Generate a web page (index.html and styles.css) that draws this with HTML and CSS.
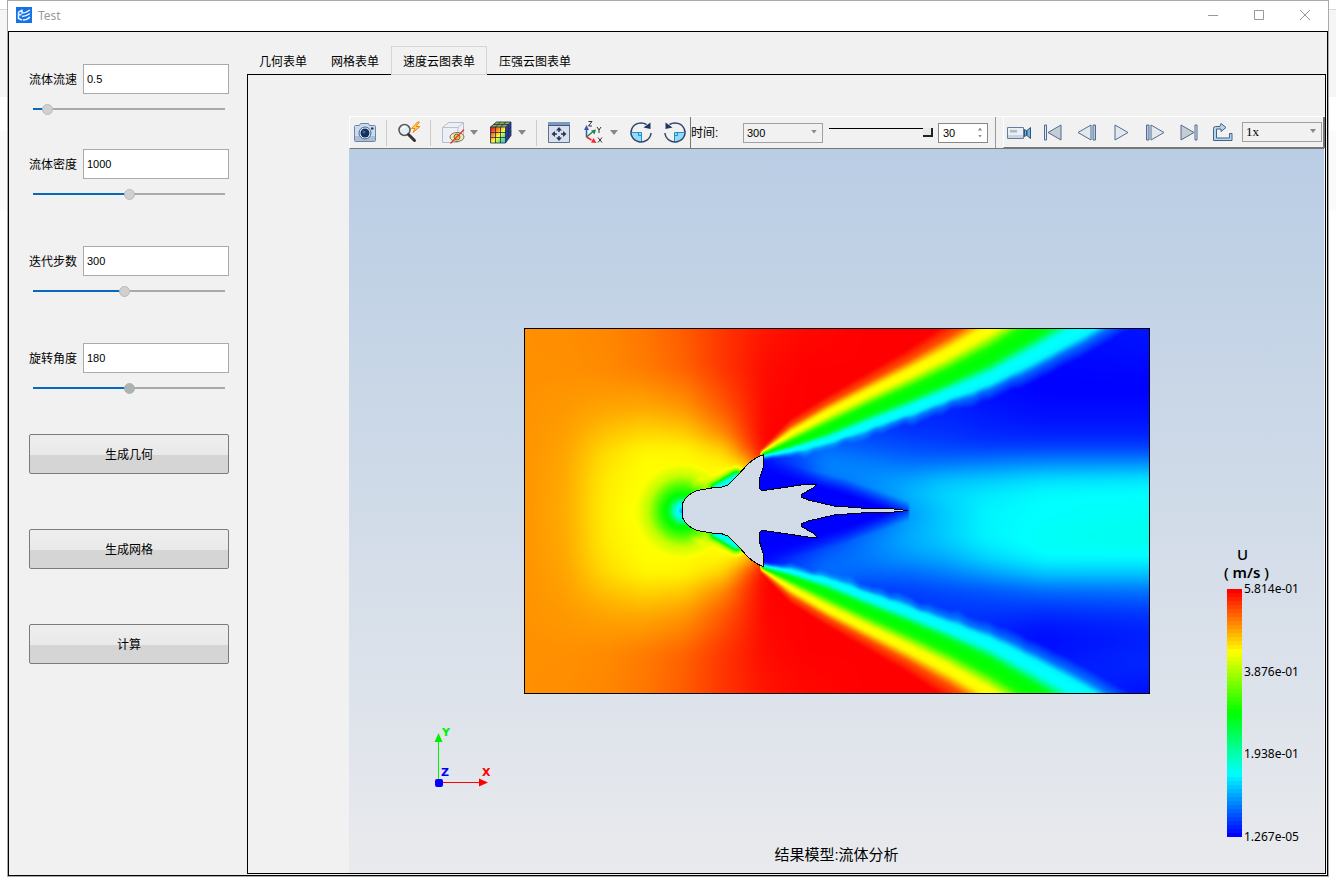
FILE: index.html
```html
<!DOCTYPE html>
<html lang="zh-CN">
<head>
<meta charset="utf-8">
<title>Test</title>
<link rel="stylesheet" href="styles.css">
</head>
<body>
<div class="window">
  <header class="titlebar">
    <svg class="logo" width="16" height="16" viewBox="0 0 16 16"><rect width="16" height="16" fill="#1673e6"/><path d="M2.500 5l3.500-1.500M2.500 5v6.500l3.500 1.500M2.500 8l3-.5M6 2.500v3.500q4 0 8-3M6 9.500q4 0 8-3M7 13q4 0 7-3" fill="none" stroke="#e8f3ff" stroke-width="1.500"/></svg>
    <h1 class="title">Test</h1>
    <div class="window-buttons">
      <button type="button" aria-label="最小化"><svg width="12" height="12" viewBox="0 0 12 12"><path d="M1 5.500h10"/></svg></button>
      <button type="button" aria-label="最大化"><svg width="12" height="12" viewBox="0 0 12 12"><path d="M1.500.5h9v9h-9z"/></svg></button>
      <button type="button" aria-label="关闭"><svg width="12" height="12" viewBox="0 0 12 12"><path d="M1 0l10 10M11 0L1 10"/></svg></button>
    </div>
  </header>
  <main class="content">
    <form class="sidebar">
      <div class="field">
        <label for="speed">流体流速</label><input id="speed" type="text" value="0.5">
        <input class="slider" type="range" aria-label="流体流速" min="0" max="10" step="0.1" value="0.5" style="--fill:5%">
      </div>
      <div class="field">
        <label for="density">流体密度</label><input id="density" type="text" value="1000">
        <input class="slider" type="range" aria-label="流体密度" min="0" max="2000" value="1000" style="--fill:50%">
      </div>
      <div class="field spaced">
        <label for="steps">迭代步数</label><input id="steps" type="text" value="300">
        <input class="slider" type="range" aria-label="迭代步数" min="0" max="635" value="300" style="--fill:47%">
      </div>
      <div class="field spaced">
        <label for="angle">旋转角度</label><input id="angle" type="text" value="180">
        <input class="slider strong" type="range" aria-label="旋转角度" min="0" max="360" value="180" style="--fill:50%">
      </div>
      <div class="actions">
        <button type="button">生成几何</button>
        <button type="button">生成网格</button>
        <button type="button">计算</button>
      </div>
    </form>
    <section class="workspace">
      <div class="tabs" role="tablist">
        <button type="button" role="tab">几何表单</button>
        <button type="button" role="tab">网格表单</button>
        <button type="button" role="tab" class="active" aria-selected="true">速度云图表单</button>
        <button type="button" role="tab">压强云图表单</button>
      </div>
      <div class="panel">
        <div class="toolbar">
          <div class="tools">
            <button class="tool" type="button" aria-label="截图"><svg viewBox="0 0 24 24"><path d="M1.500 5.500q0-1 1-1h4l1-2h8l1 2h5q1 0 1 1v14q0 1-1 1h-19q-1 0-1-1z" fill="#c9dcee" stroke="#6d86a8"/><path d="M2 15h20v5H2z" fill="#a9bed6"/><circle cx="12" cy="12" r="6" fill="#e8f0f8" stroke="#47648c"/><circle cx="12" cy="12" r="4.500" fill="#14305e"/><circle cx="11" cy="11" r="1.500" fill="#42659a"/><path d="M18 7.500h2.500" stroke="#14305e" stroke-width="2"/></svg></button>
            <i class="sep"></i>
            <button class="tool" type="button" aria-label="快速缩放"><svg viewBox="0 0 24 24"><circle cx="7.500" cy="9" r="5.500" fill="#e6edf1" stroke="#555" stroke-width="1.500"/><path d="M4.500 8q1-2.500 4-2.500" fill="none" stroke="#fff" stroke-width="1.500"/><path d="M11.500 13.500l6 6" stroke="#333" stroke-width="3" stroke-linecap="round"/><path d="M20.500 1l-6 6.500h3.500l-2 4 7-6h-4L22.500 1z" fill="#ffd34e" stroke="#f0821c"/></svg></button>
            <i class="sep"></i>
            <button class="tool" type="button" aria-label="显示隐藏"><svg viewBox="0 0 24 24"><path d="M1.500 6.500l6-5h15v13l-5.500 7H1.500z" fill="#eceff5" stroke="#b7bcc8"/><path d="M1.500 6.500H17v15M17 6.500L22.500 1.500" fill="none" stroke="#bcc1cc"/><ellipse cx="16" cy="16" rx="7" ry="4.500" fill="#fbe7a1" stroke="#6c7179"/><circle cx="16" cy="16" r="3" fill="#eebf52" stroke="#77684a"/><path d="M9.500 22.500L23 8.500" stroke="#dd4024" stroke-width="1.300"/></svg></button><i class="arrow"></i>
            <button class="tool after-arrow" type="button" aria-label="着色"><svg viewBox="0 0 24 24"><defs><linearGradient id="cube" x1="0" y1="0" x2="1" y2="1"><stop offset="0.100" stop-color="#f2221a"/><stop offset="0.350" stop-color="#ff9620"/><stop offset="0.550" stop-color="#ffff32"/><stop offset="0.750" stop-color="#6de66e"/><stop offset="1" stop-color="#35b8ff"/></linearGradient></defs><path d="M1.500 6l6-5H22v13.500L16.500 22h-15z" fill="#26409f"/><path d="M1.500 6H16.500v16H1.500z" fill="url(#cube)"/><path d="M1.500 6l6-5H22l-5.500 5z" fill="#86b54c"/><path d="M1.500 6H16.500v16H1.500zM6.500 6v16M11.500 6v16M1.500 11.500h15M1.500 16.500h15M16.500 6L22 1v13.500L16.500 22M19.500 4v14M16.500 11.500L22 6M16.500 16.500L22 10M1.500 6l6-5H22M6.500 6l5-5M11.500 6l5.500-5M4.500 3.500h15" fill="none" stroke="#222c4e" stroke-width=".8"/></svg></button><i class="arrow"></i>
            <i class="sep"></i>
            <button class="tool" type="button" aria-label="适应窗口"><svg viewBox="0 0 24 24"><path d="M1.500 1.500h21v20h-21z" fill="#d9e0ea" stroke="#5d7293"/><path d="M1 1h22v3H1z" fill="#7e9abb"/><path d="M1 4.500h22" stroke="#415c87"/><path d="M12 6l3 3.500H9zM12 20l3-3.500H9zM4.500 13l3.500-3v6zM19.500 13l-3.500-3v6z" fill="#213862"/><path d="M12 8v3M12 15v3M7 13h3M14 13h3" stroke="#213862" stroke-width="1.500"/></svg></button>
            <button class="tool gap" type="button" aria-label="视图方向"><svg viewBox="0 0 24 24"><path d="M5.500 16V7" stroke="#3557ba" stroke-width="1.500"/><path d="M5.500 4L8 9H3z" fill="#3557ba"/><path d="M5.500 16l6-5" stroke="#25834a" stroke-width="1.500"/><path d="M15 8.500l-1.500 5-3.500-4z" fill="#25834a"/><path d="M5.500 16l5 3" stroke="#ef2929" stroke-width="1.500"/><path d="M15.500 22l-5.500-.5 2.500-4.500z" fill="#ef2929"/><path d="M7.500.5H11L7.500 5H11M16 6l2 3 2-3M18 9v3M17 16.500l4 5M21 16.500l-4 5" fill="none" stroke="#333"/></svg></button><i class="arrow"></i>
            <button class="tool after-arrow" type="button" aria-label="顺时针旋转"><svg viewBox="0 0 24 24"><path d="M3 11.500h9.500V21Q4 19.500 3 11.500z" fill="#8edcff"/><path d="M3 11.500h9.500V21M9.500 11.500v3h3" fill="none" stroke="#278dc4"/><path d="M22 12a10 9.500 0 1 1-4.500-8.500" fill="none" stroke="#2e456e" stroke-width="1.500"/><path d="M21.500 1.500v6.500l-7-1.500z" fill="#20365f"/></svg></button>
            <button class="tool gap" type="button" aria-label="逆时针旋转"><svg viewBox="0 0 24 24"><path d="M21 11.500h-9.500V21Q20 19.500 21 11.500z" fill="#8edcff"/><path d="M21 11.500h-9.500V21M14.500 11.500v3h-3" fill="none" stroke="#278dc4"/><path d="M2 12A10 9.500 0 1 0 6.500 3.500" fill="none" stroke="#2e456e" stroke-width="1.500"/><path d="M2.500 1.500v6.500l7-1.500z" fill="#20365f"/></svg></button>
          </div>
          <div class="timebar">
            <label for="time">时间:</label>
            <span class="combo"><select id="time"><option>300</option></select></span>
            <input class="frame-slider" type="range" aria-label="帧" min="0" max="30" value="30">
            <span class="spin"><input type="number" aria-label="帧数" value="30"></span>
          </div>
          <div class="player">
            <button class="tool" type="button" aria-label="录制"><svg viewBox="0 0 24 24"><path d="M.5 7.500h16v11H.5z" fill="#e9eef5" stroke="#667d9e"/><path d="M3 10h7v2.500H3z" fill="#adb7c5"/><path d="M1 15h15v3H1z" fill="#c9d4e1"/><path d="M17.500 9.500l2 1v5l-2 1zM20 10.500l3.500-3v11L20 15.500z" fill="#6fb2dc" stroke="#315375"/></svg></button>
            <button class="tool" type="button" aria-label="第一帧"><svg viewBox="0 0 24 24"><path d="M3.500 5h2v15h-2z" fill="#dce6ef" stroke="#536b93"/><path d="M20 5v15L7 12.500z" fill="#c5cdd3" stroke="#536b93"/></svg></button>
            <button class="tool" type="button" aria-label="上一帧"><svg viewBox="0 0 24 24"><path d="M3 12.500L16 5v15z" fill="#e2e9ed" stroke="#536b93"/><path d="M18 5h2.500v15H18z" fill="#b9cbe0" stroke="#536b93"/></svg></button>
            <button class="tool" type="button" aria-label="播放"><svg viewBox="0 0 24 24"><path d="M6 5l13 7.500L6 20z" fill="#e2e9ed" stroke="#536b93"/></svg></button>
            <button class="tool" type="button" aria-label="下一帧"><svg viewBox="0 0 24 24"><path d="M21 12.500L8 5v15z" fill="#e2e9ed" stroke="#536b93"/><path d="M3.500 5H6v15H3.500z" fill="#b9cbe0" stroke="#536b93"/></svg></button>
            <button class="tool" type="button" aria-label="最后一帧"><svg viewBox="0 0 24 24"><path d="M18 5h2v15h-2z" fill="#dce6ef" stroke="#536b93"/><path d="M4 5v15l13-7.500z" fill="#c5cdd3" stroke="#536b93"/></svg></button>
            <button class="tool" type="button" aria-label="循环"><svg viewBox="0 0 24 24"><path d="M9 6.500H4.500Q2.500 6.500 2.500 8.500V20.500h18.500V13.500h-2.500V18H5.500V9H10v2.500l5-4L10 3.500z" fill="#b9d5e9" stroke="#40628b"/></svg></button>
            <span class="combo rate"><select aria-label="播放速度"><option>1x</option></select></span>
          </div>
        </div>
        <div class="viewport">
          <div class="plot">
            <canvas id="field" width="624" height="364"></canvas>
            <svg class="craft" viewBox="0 0 624 364"><path d="M157 181.500V176Q159 170 164 166Q170 161 181 160Q190 158 196 158.500L203 156L213 146L223 135Q232 127 238.500 126L238.500 138Q236 144 234 152V158Q235 162 239 161.500L283 155L292 155L288 159L277 165L276 168L283 171Q296 174 309 177L336 179L369 180L383 181.500L369 183L336 184L309 186Q296 189 283 192L276 195L277 198L288 204L292 208L283 208L239 201.500Q235 201 234 205V211Q236 219 238.500 225L238.500 237.500Q232 236 223 228L213 217L203 207L196 204.500Q190 205 181 203Q170 202 164 197Q159 193 157 187Z"/></svg>
          </div>
          <svg class="triad" width="64" height="68" viewBox="0 0 64 68"><path d="M8.500 57V14" stroke="#00f000"/><path d="M8.500 8l4 9h-8z" fill="#00f000"/><path d="M9 57.500h42" stroke="#f00"/><path d="M58 57.500l-9-4v8z" fill="#f00"/><rect x="5" y="54" width="8" height="8" rx="2" fill="#00f"/><text x="12" y="11" fill="#00f000">Y</text><text x="11" y="51" fill="#00f">Z</text><text x="52" y="51" fill="#f00">X</text></svg>
          <div class="legend">
            <p class="quantity">U</p>
            <p class="unit">( <b>m/s</b> )</p>
            <div class="scale">
              <canvas id="scale" width="15" height="248"></canvas>
              <ol><li>5.814e-01</li><li>3.876e-01</li><li>1.938e-01</li><li>1.267e-05</li></ol>
            </div>
          </div>
          <p class="caption">结果模型:流体分析</p>
        </div>
      </div>
    </section>
  </main>
</div>
<script src="plot.js"></script>
</body>
</html>
```

FILE: styles.css
```css
* { box-sizing: border-box; }

body {
  margin: 0;
  min-height: 100vh;
  display: flex;
  flex-direction: column;
  background: linear-gradient(#fff 9px, #d8d8d8 9px 10px, #f5f5f5 10px 97px, #fff 97px 131px, #fafafa 131px 211px, #fff 211px);
  color: #000;
  font: 12px/16px "Liberation Sans", "Noto Sans CJK SC", sans-serif;
}

button, input, select { font: inherit; color: inherit; margin: 0; padding: 0; border: 0; border-radius: 0; }
button { background: none; }
p, h1, ol { margin: 0; padding: 0; list-style: none; font-weight: normal; }

.window {
  flex: 1;
  display: flex;
  flex-direction: column;
  margin: 0 7px 7px;
  border: 1px solid #aaa;
  background: #f1f1f1;
}

.titlebar {
  display: flex;
  align-items: center;
  height: 30px;
  padding: 0 17px 0 8px;
  gap: 6px;
  background: #fff;
}
.logo { margin-bottom: 2px; }
.title { font: 12px/16px "Noto Sans", sans-serif; color: #999; }
.window-buttons { display: flex; gap: 34px; margin-left: auto; }
.window-buttons button { width: 12px; height: 12px; display: flex; }
.window-buttons svg { fill: none; stroke: #999; }

.content { flex: 1; display: flex; border: 1px solid #000; }

.sidebar { flex: none; width: 238px; padding: 32px 18px 0 20px; }
.field { display: grid; grid-template-columns: 54px 1fr; align-items: center; row-gap: 7px; margin-bottom: 32px; }
.spaced { margin-top: 44px; margin-bottom: 44px; }
.field label { padding-top: 2px; }
.field input[type="text"] {
  min-width: 0;
  height: 30px;
  padding: 0 3px;
  border: 1px solid #aaa;
  background: #fff;
  font-size: 11px;
}

.slider {
  grid-column: 1 / -1;
  appearance: none;
  height: 16px;
  margin: 0 4px;
  background: linear-gradient(to right, #0868bd var(--fill), #aaa var(--fill)) center / 100% 2px no-repeat;
}
.slider::-webkit-slider-thumb { appearance: none; width: 11px; height: 11px; border-radius: 50%; background: #d0d0d0; border: 1px solid #bbb; }
.strong::-webkit-slider-thumb { background: #adb2b5; border-color: #adb2b5; }

.actions { display: flex; flex-direction: column; gap: 55px; margin-top: -6px; }
.actions button {
  height: 40px;
  padding-top: 2px;
  border: 1px solid #7c7c7c;
  border-radius: 2px;
  background: linear-gradient(#eee, #e9e9e9 53%, #d5d5d5 53%);
}

.workspace { flex: 1; min-width: 0; display: flex; flex-direction: column; padding: 14px 1px 1px 0; }
.tabs { display: flex; position: relative; margin-bottom: -1px; }
.tabs button { height: 29px; padding: 2px 11px 0; border: 1px solid transparent; }
.tabs .active { border-color: #d5d5d5; background: #f1f1f1; }
.panel { flex: 1; display: flex; flex-direction: column; border: 1px solid #000; padding: 41px 1px 0 101px; }

.toolbar { display: flex; height: 33px; border-top: 1px solid #fff; border-left: 1px solid #fff; border-bottom: 1px solid #777; }
.toolbar > div { display: flex; align-items: center; }
.tools { padding: 0 3px; border-right: 1px solid #777; }
.tool { flex: none; width: 24px; height: 24px; }
.tool svg { display: block; width: 24px; height: 24px; }
.gap, .after-arrow { margin-left: 10px; }
.sep { width: 1px; height: 26px; margin: 0 10px 0 9px; background: #ccc; }
.arrow { width: 8px; height: 5px; margin-left: 5px; margin-right: 1px; background: #888; clip-path: polygon(0 0, 100% 0, 50% 100%); }

.timebar { padding: 0 7px 0 0; border-right: 1px solid #999; }
.timebar label { width: 52px; }
.combo { position: relative; width: 80px; height: 20px; }
.combo select { appearance: none; width: 100%; height: 100%; padding: 0 3px; border: 1px solid #a0a0a0; background: #f1f1f1; font-size: 11px; }
.combo::after { content: ""; position: absolute; right: 6px; top: 7px; width: 6px; height: 4px; background: #888; clip-path: polygon(0 0, 100% 0, 50% 100%); pointer-events: none; }
.frame-slider { appearance: none; width: 104px; height: 10px; margin: 0 5px 0 6px; background: linear-gradient(#000, #000) 0 0 / 94px 1px no-repeat; }
.frame-slider::-webkit-slider-thumb { appearance: none; width: 10px; height: 9px; background: #e8e8e8; border: solid #222; border-width: 0 2px 2px 0; }
.spin { position: relative; width: 50px; height: 20px; }
.spin input { appearance: textfield; width: 100%; height: 100%; padding: 0 4px; border: 1px solid #888; background: #fff; font-size: 11px; }
.spin input::-webkit-inner-spin-button { appearance: none; }
.spin::before, .spin::after { content: ""; position: absolute; right: 6px; width: 4px; height: 3px; background: #888; }
.spin::before { top: 5px; clip-path: polygon(0 100%, 100% 100%, 50% 0); }
.spin::after { bottom: 5px; clip-path: polygon(0 0, 100% 0, 50% 100%); }

.player { flex: 1; gap: 10px; margin-left: 7px; padding: 0 1px 0 3px; border-left: 1px solid #fff; border-right: 2px solid #777; border-bottom: 1px solid #777; }
.rate { flex: 1; margin-left: -3px; }
.rate select { font-family: "Liberation Serif", serif; font-size: 13px; }

.viewport {
  flex: 1;
  position: relative;
  display: grid;
  place-items: center;
  background: linear-gradient(#b9cde4, #e9eaed);
}
.plot { display: grid; border: 1px solid #000; }
.plot > * { grid-area: 1 / 1; display: block; }
.craft { width: 100%; height: 100%; fill: #d2dce8; stroke: #000; shape-rendering: crispEdges; }

.triad { position: absolute; left: 81px; bottom: 80px; font: bold 11px "DejaVu Sans", sans-serif; }
.legend { position: absolute; right: 25px; bottom: 28px; font-family: "Noto Sans", sans-serif; }
.quantity, .unit { font-size: 15px; line-height: 18px; font-weight: 500; }
.quantity { padding-left: 10px; }
.unit { margin-left: -3px; }
.unit b { font-weight: 600; }
.scale { display: flex; gap: 2px; height: 264px; align-items: center; }
.scale ol { display: flex; flex-direction: column; justify-content: space-between; height: 264px; }
.caption { position: absolute; bottom: 8px; left: 0; right: 0; text-align: center; font-size: 15px; line-height: 20px; }
```

FILE: plot.js
```js
(function () {
  var W = 624, H = 364;

  // Blue, cyan, green, yellow, red in equal steps.
  function colour(v) {
    v = Math.max(0, Math.min(1, v)) * 4;
    var c = v < 1 ? [0, v, 1] : v < 2 ? [0, 1, 2 - v] : v < 3 ? [v - 2, 1, 0] : [1, 4 - v, 0];
    return c.map(function (n) { return Math.round(n * 255); });
  }

  function interp(xs, ys, x) {
    var i = 0;
    while (i < xs.length - 2 && x > xs[i + 1]) i++;
    var t = (x - xs[i]) / (xs[i + 1] - xs[i]);
    return ys[i] + (ys[i + 1] - ys[i]) * t;
  }

  function clampInterp(xs, ys, x) {
    return interp(xs, ys, Math.max(xs[0], Math.min(xs[xs.length - 1], x)));
  }

  function makeField(cols, rows, table, radius) {
    var a = new Float32Array(W * H), x, y;
    for (y = 0; y < H; y++) {
      var line = cols.map(function (c, i) {
        return clampInterp(rows, table.map(function (r) { return r[i]; }), y);
      });
      for (x = 0; x < W; x++) a[y * W + x] = clampInterp(cols, line, x);
    }
    return smooth(smooth(a, radius), radius);
  }

  function smooth(src, r) {
    function pass(s, n, m, step, stride) {
      var d = new Float32Array(s.length);
      for (var j = 0; j < m; j++) {
        for (var i = 0; i < n; i++) {
          var sum = 0;
          for (var k = -r; k <= r; k++) sum += s[j * stride + Math.max(0, Math.min(n - 1, i + k)) * step];
          d[j * stride + i * step] = sum / (2 * r + 1);
        }
      }
      return d;
    }
    return pass(pass(src, W, H, 1, W), H, W, W, 1);
  }

  var outerHalf = [
    [0,   [.859, .861, .868, .884, .912, .950, .965, .980, .992, 1, 1]],
    [40,  [.859, .859, .865, .880, .905, .950, .970, .990, 1, 1, 1]],
    [80,  [.857, .850, .838, .832, .850, .915, .955, .995, 1, 1, 1]],
    [105, [.856, .844, .808, .785, .795, .865, .940, 1, 1, 1, 1]],
    [122, [.856, .840, .785, .755, .755, .790, .900, 1, 1, 1, 1]],
    [138, [.855, .836, .775, .750, .755, .755, .770, .950, 1, 1, 1]],
    [155, [.855, .834, .768, .748, .760, .740, .750, .800, 1, 1, 1]],
    [182, [.855, .832, .765, .740, .740, .740, .750, .800, 1, 1, 1]]
  ];
  var outerRows = outerHalf.map(function (r) { return r[0]; });
  var outerTable = outerHalf.map(function (r) { return r[1]; });
  for (var n = outerHalf.length - 2; n >= 0; n--) {
    outerRows.push(364 - outerHalf[n][0]);
    outerTable.push(outerHalf[n][1]);
  }
  var outer = makeField([0, 40, 80, 120, 160, 200, 220, 240, 280, 340, 624], outerRows, outerTable, 7);

  var wake = makeField(
    [240, 270, 300, 340, 383, 420, 460, 520, 624],
    [0, 60, 95, 115, 130, 150, 165, 182, 210, 228, 245, 262, 285, 305, 335, 364],
    [
      [.06, .06, .06, .06, .05, .03, .01, .01, .02],
      [.06, .06, .06, .06, .05, .03, .01, .00, .00],
      [.06, .06, .06, .06, .04, .04, .03, .02, .02],
      [.05, .07, .10, .08, .07, .06, .05, .05, .05],
      [.02, .07, .13, .12, .10, .10, .11, .12, .12],
      [.01, .04, .12, .14, .16, .19, .20, .22, .23],
      [.00, .00, .04, .12, .18, .21, .23, .25, .25],
      [.00, .00, .00, .04, .15, .20, .24, .25, .26],
      [.00, .00, .05, .12, .17, .20, .24, .26, .27],
      [.01, .05, .10, .12, .15, .17, .21, .25, .25],
      [.03, .08, .11, .10, .10, .12, .15, .19, .19],
      [.06, .07, .07, .05, .06, .07, .08, .10, .11],
      [.06, .06, .06, .05, .05, .05, .05, .04, .05],
      [.06, .06, .06, .05, .05, .05, .03, .01, .03],
      [.06, .06, .06, .05, .05, .05, .03, .02, .04],
      [.06, .06, .06, .05, .05, .05, .05, .05, .01]
    ], 7);

  // Height of each colour of the shear layer at these x.
  var X = [236, 265, 302, 342, 383, 424, 465, 510, 560, 624];
  var RED = [119, 89, 66, 43, 19, -8, -36, -68, -103, -148];
  var YEL = [123, 104, 83, 63, 43, 22, -2, -32, -64, -105];
  var GRN = [125, 115, 100, 82, 65, 47, 27, 0, -32, -75];
  var CYN = [127, 121, 112, 97, 82, 66, 50, 27, 0, -38];
  var BLU = [129, 129, 121, 109, 96, 83, 71, 52, 26, -12];

  function segment(px, py, ax, ay, bx, by) {
    var dx = bx - ax, dy = by - ay;
    var t = Math.max(0, Math.min(1, ((px - ax) * dx + (py - ay) * dy) / (dx * dx + dy * dy)));
    return Math.hypot(px - ax - t * dx, py - ay - t * dy);
  }

  var field = new Float32Array(W * H);
  for (var y = 0; y < H; y++) {
    for (var x = 0; x < W; x++) {
      var i = y * W + x, h = y < 182 ? y : 363 - y, v = outer[i];
      if (x < 238 && !(x > 230 && h > 134)) {
        var r = Math.hypot(x - 157, (y - 181.5) * .95);
        v -= clampInterp([0, 3, 8, 14, 22, 34, 46], [.62, .52, .44, .27, .2, .06, 0], r);
        var d = segment(x, h, 191, 159, 211, 147);
        v -= .5 * Math.exp(-d * d / 34);
        var o = segment(x, h, 168, 155, 176, 150);
        v += .03 * Math.exp(-o * o / 12);
      }
      if (x >= 236 || (x > 230 && h > 134)) {
        var w = wake[i];
        // Still air behind the wings, narrowing to the tail.
        var lim = interp([238, 285, 320, 384], [136, 149, 158, 181], x);
        if (x < 384 && h > lim - 9) w *= Math.max(0, (lim + 7 - h) / 16);
        var side = y > 182 ? 2.4 : 0;
        var rag = (Math.sin(x * .23 + side) + Math.sin(x * .113 + 1 + side) + Math.sin(x * .41) * .5) * 1.2 * clampInterp([238, 280, 420, 540], [0, 1, 1, .2], x);
        var red = interp(X, RED, x), yel = interp(X, YEL, x), grn = interp(X, GRN, x), cyn = interp(X, CYN, x);
        var blu = Math.max(interp(X, BLU, x) + rag, cyn + 4);
        if (h >= blu) v = w;
        else if (h > red) {
          v = interp(
            [red, (red + yel) / 2, yel - (yel - red) * .12, yel + (grn - yel) * .22, grn - (grn - yel) * .3, grn + (cyn - grn) * .28, cyn - (cyn - grn) * .28, cyn + (blu - cyn) * .2, (cyn + blu) / 2, blu],
            [1, .92, .76, .74, .52, .48, .26, .24, (.24 + w) / 2 - .02, w], h);
        }
      }
      field[i] = v;
    }
  }
  field = smooth(field, 1);

  var ctx = document.getElementById("field").getContext("2d");
  var img = ctx.createImageData(W, H);
  for (var p = 0; p < W * H; p++) {
    var c = colour(field[p]);
    img.data.set([c[0], c[1], c[2], 255], p * 4);
  }
  ctx.putImageData(img, 0, 0);

  var bar = document.getElementById("scale").getContext("2d");
  for (var s = 0; s < 62; s++) {
    bar.fillStyle = "rgb(" + colour(1 - s / 61).join(",") + ")";
    bar.fillRect(0, s * 4, 15, 4);
  }
})();
```
